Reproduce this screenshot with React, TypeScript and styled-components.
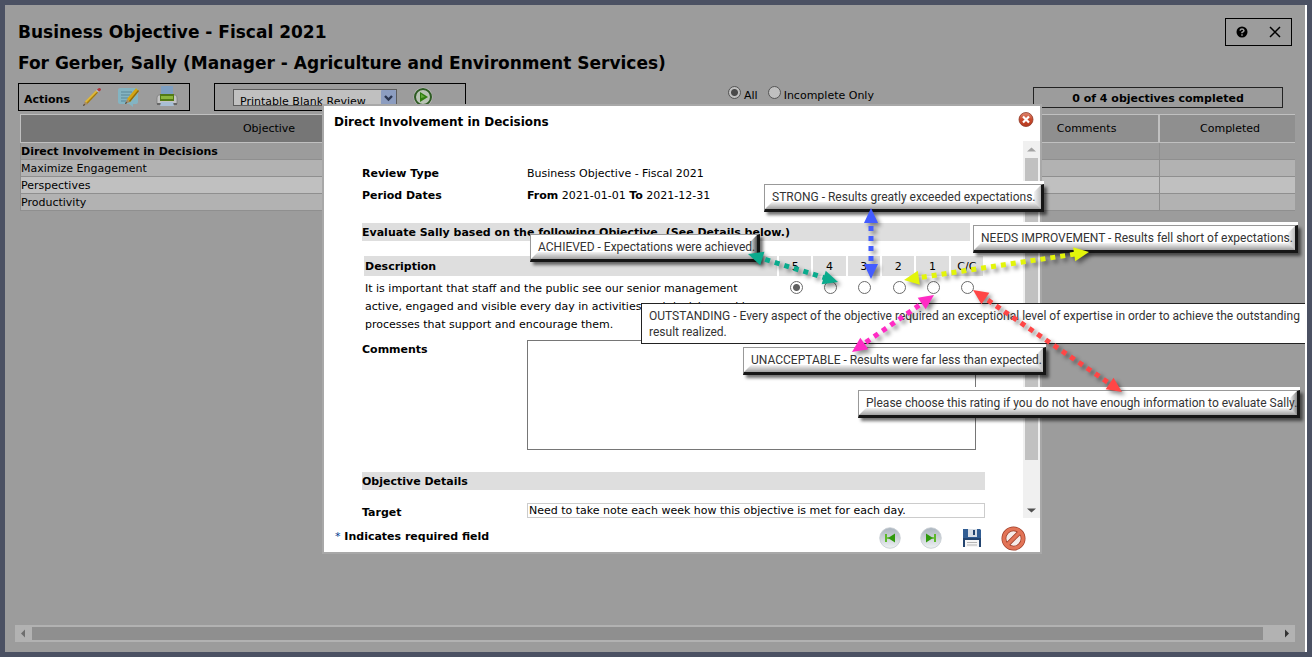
import React from "react";
import styled, { createGlobalStyle } from "styled-components";

const GlobalStyle = createGlobalStyle`
  * { box-sizing: border-box; }
  body {
    margin: 0;
    background: #4b5163;
    color: #000;
    font-family: Verdana, "DejaVu Sans", sans-serif;
    font-size: 11px;
  }
  h1, h2, h3, p { margin: 0; }
  button {
    display: inline-flex;
    align-items: center;
    justify-content: center;
    padding: 0;
    border: 0;
    background: none;
    cursor: pointer;
  }
  input, select, textarea { font: inherit; color: inherit; }
`;

const Frame = styled.div`
  display: flex;
  min-height: 100vh;
  padding: 5px;
  background: #4b5163;
`;

const Page = styled.main`
  position: relative;
  display: flex;
  flex-direction: column;
  flex: 1;
  min-width: 0;
  padding: 12px 10px 10px;
  overflow: hidden;
  border-right: 2px solid #fff;
  background: #9c9c9c;
`;

const Header = styled.header`
  display: flex;
  justify-content: space-between;
  align-items: flex-start;
  padding: 0 3px;
`;

const Heading = styled.h1`
  font-size: 17px;
  line-height: 31px;
  font-weight: bold;
`;

const WindowTools = styled.div`
  display: flex;
  justify-content: space-around;
  width: 67px;
  height: 28px;
  margin-top: 1px;
  border: 1px solid #000;
`;

const Toolbar = styled.div`
  display: flex;
  align-items: flex-start;
  height: 31px;
  margin-top: 4px;
  padding: 0 12px 0 3px;
`;

const Panel = styled.div<{ $width: number }>`
  display: flex;
  align-items: center;
  gap: 16px;
  width: ${(p) => p.$width}px;
  height: 28px;
  border: 1px solid #000;
`;

const ActionsPanel = styled(Panel)`
  padding: 0 5px;
  margin-right: 24px;
  strong { line-height: 28px; padding-top: 5px; margin-right: -4px; }
`;

const ReportPanel = styled(Panel)`
  padding: 0 18px;
`;

const SelectWrap = styled.div`
  position: relative;
  width: 164px;
  height: 17px;
  svg { position: absolute; top: 1px; right: 1px; pointer-events: none; }
`;

const Select = styled.select`
  appearance: none;
  width: 100%;
  height: 17px;
  padding: 5px 18px 0 6px;
  border: 1px solid #5c5c5c;
  border-radius: 0;
  background: #c0c0c0;
  line-height: 13px;
`;

const Filters = styled.div`
  display: flex;
  gap: 10px;
  margin-left: 262px;
  padding-top: 3px;
  label { display: flex; align-items: flex-start; gap: 3px; line-height: 20px; }
`;

const Radio = styled.input<{ $dim?: boolean }>`
  appearance: none;
  flex: none;
  width: 13px;
  height: 13px;
  margin: 0;
  border: 1px solid ${(p) => (p.$dim ? "#555" : "#6b6b6b")};
  border-radius: 50%;
  background: ${(p) => (p.$dim ? "#c0c0c0" : "#fff")};
  &:checked {
    background: radial-gradient(
      circle,
      ${(p) => (p.$dim ? "#4a4a4a" : "#606060")} 0 3px,
      ${(p) => (p.$dim ? "#c0c0c0" : "#fff")} 4px
    );
  }
`;

const Status = styled.div`
  width: 250px;
  margin: 4px 0 0 auto;
  padding-top: 2px;
  border: 1px solid #222;
  line-height: 17px;
  font-weight: bold;
  text-align: center;
`;

const ObjectiveTable = styled.table`
  width: calc(100% - 5px);
  margin-left: 5px;
  border-collapse: collapse;
  table-layout: fixed;
  th {
    height: 28px;
    padding: 0;
    border: 1px solid #c0c0c0;
    border-right-width: 0;
    background: #8f8f8f;
    font-weight: normal;
  }
  th:first-child { background: #767676; }
  th + th + th + th { border-left-width: 2px; padding-left: 5px; }
  td {
    height: 17px;
    padding: 0;
    border: 1px solid #8f8f8f;
    border-right-width: 0;
    border-top-width: 0;
    line-height: 15px;
  }
`;

const ObjectiveRow = styled.tr<{ $bg: string; $active?: boolean }>`
  background: ${(p) => p.$bg};
  font-weight: ${(p) => (p.$active ? "bold" : "normal")};
`;

const PageScroll = styled.div`
  display: flex;
  align-items: center;
  justify-content: space-between;
  height: 17px;
  margin-top: auto;
  background: #b2b2b2;
`;

const PageThumb = styled.div`
  flex: 1;
  height: 13px;
  margin-right: 15px;
  background: #8f8f8f;
`;

const Dialog = styled.section`
  position: absolute;
  top: 99px;
  left: calc(50% - 333px);
  width: 720px;
  border: 2px solid #a8a8a8;
  background: #fff;
`;

const DialogHead = styled.header`
  display: flex;
  justify-content: space-between;
  align-items: flex-start;
  height: 35px;
  padding: 6px 6px 0 10px;
`;

const DialogTitle = styled.h2`
  font-size: 12px;
  line-height: 20px;
`;

const DialogBody = styled.div`
  display: flex;
  height: 377px;
  overflow: hidden;
`;

const Form = styled.form`
  flex: 1;
  min-width: 0;
  padding: 22px 38px 0;
`;

const Row = styled.div`
  display: grid;
  grid-template-columns: 165px 1fr;
  line-height: 22px;
`;

const Label = styled.label`
  font-weight: bold;
`;

const Term = styled.span`
  font-weight: bold;
`;

const SectionBar = styled.h3<{ $short?: boolean }>`
  margin: ${(p) => (p.$short ? "16px 15px 13px 0" : "22px 0 13px")};
  padding-top: 1px;
  background: #dedede;
  font-size: 11px;
  line-height: 17px;
`;

const RatingTable = styled.table`
  width: 100%;
  border-spacing: 2px;
  table-layout: fixed;
  th {
    height: 20px;
    padding: 0 1px;
    background: #dedede;
    font-weight: normal;
  }
  th:first-child { width: 413px; text-align: left; font-weight: bold; }
  td { padding: 2px 0 0 2px; vertical-align: top; text-align: center; }
  td:first-child { padding: 2px 16px 0 1px; text-align: left; line-height: 18px; }
  td input { margin-top: 1px; }
`;

const Comments = styled.textarea`
  display: block;
  width: 449px;
  height: 110px;
  border: 1px solid #767676;
  resize: none;
`;

const CommentsRow = styled(Row)`
  margin-top: 4px;
  label { line-height: 20px; }
`;

const Target = styled.input`
  width: 100%;
  height: 15px;
  padding: 0 1px;
  border: 1px solid #ccc;
`;

const TargetRow = styled(Row)`
  label { line-height: 20px; }
`;

const ScrollBar = styled.div`
  display: flex;
  flex-direction: column;
  align-items: center;
  width: 17px;
  background: #f0f0f0;
`;

const ScrollThumb = styled.div`
  width: 13px;
  height: 302px;
  margin-bottom: auto;
  background: #c1c1c1;
`;

const DialogFoot = styled.footer`
  display: flex;
  align-items: center;
  justify-content: space-between;
  height: 34px;
  padding: 2px 14px 0 11px;
  font-weight: bold;
  span { font-weight: normal; color: #003a8c; }
`;

const FootButtons = styled.div`
  display: flex;
  gap: 15px;
  padding-top: 4px;
  button { width: 26px; height: 28px; }
`;

const Note = styled.div<{ $x: number; $y: number; $w: number; $shade?: string; $flat?: boolean }>`
  position: absolute;
  left: ${(p) => p.$x}px;
  top: ${(p) => p.$y}px;
  width: ${(p) => p.$w}px;
  height: 28px;
  padding-left: 7px;
  border: 1px solid #999;
  border-width: 1px 3px 3px 1px;
  border-right-color: #161616;
  border-bottom-color: #161616;
  background: #fff;
  box-shadow: 0 ${(p) => (p.$flat ? 0 : -3)}px 0 #fff, 3px 3px 3px rgba(0, 0, 0, 0.55);
  color: #333;
  font-family: "Segoe UI", Roboto, sans-serif;
  font-size: 12px;
  line-height: 24px;
  white-space: nowrap;
  span { position: relative; z-index: 1; }
  &::before {
    content: "";
    position: absolute;
    inset: auto 0 0 0;
    height: 7px;
    background: linear-gradient(#f4f4f4, #a0a0a0);
    clip-path: polygon(7px 0, 100% 0, 100% 100%, 0 100%);
  }
  &::after {
    content: "";
    position: absolute;
    inset: 0 0 0 auto;
    width: 7px;
    background: linear-gradient(90deg, #f4f4f4, ${(p) => p.$shade ?? "#bbb"});
    clip-path: polygon(100% 0, 100% 100%, 0 calc(100% - 7px), 0 7px);
  }
`;

const PlainNote = styled.div`
  position: absolute;
  left: 317px;
  top: 197px;
  width: 668px;
  padding: 4px 7px 3px;
  border: 1px solid #222;
  background: #fff;
  color: #333;
  font-family: "Segoe UI", Roboto, sans-serif;
  font-size: 12px;
  line-height: 16px;
`;

const ArrowLayer = styled.svg`
  position: absolute;
  left: 0;
  top: 0;
  pointer-events: none;
  filter: drop-shadow(3px 3px 2px rgba(0, 0, 0, 0.45));
`;

type ArrowProps = { from: [number, number]; to: [number, number]; color: string };

function Arrow({ from, to, color }: ArrowProps) {
  const dx = to[0] - from[0];
  const dy = to[1] - from[1];
  const length = Math.hypot(dx, dy);
  const angle = (Math.atan2(dy, dx) * 180) / Math.PI;
  return (
    <g transform={`translate(${from[0]} ${from[1]}) rotate(${angle})`} fill={color}>
      <path d="M0 0 15-7V7Z" />
      <path d={`M${length} 0l-15-7v14z`} />
      <path d={`M18 0H${length - 14}`} stroke={color} strokeWidth="5" strokeDasharray="5 5" />
    </g>
  );
}

const PencilIcon = () => (
  <svg width="20" height="20" viewBox="0 0 20 20">
    <path d="M1 19 3 14 6 17Z" fill="#a58a66" />
    <path d="M1 19 2 17 3 18Z" fill="#222" />
    <path d="M3 14.5 14 3.5 16 5.5 5.5 16.5Z" fill="#c79a16" />
    <path d="M3 14.5 14 3.5 15 4.5 4 15.5Z" fill="#dfba45" />
    <path d="M5 16 15.5 5 16 5.5 5.5 16.5Z" fill="#8f6a0c" />
    <path d="M14 3.5 15 2.5 17 4.5 16 5.5Z" fill="#bbb" />
    <path d="M15 2.5Q17 0 18.5 1.5T17 4.5Z" fill="#b3383c" />
  </svg>
);

const NoteIcon = () => (
  <svg width="22" height="20" viewBox="0 0 22 20">
    <path d="M2 1H18Q20 1 20 3V15Q20 17 18 17H15L15 20 11 17H2Q0 17 0 15V3Q0 1 2 1Z" fill="#83b4c2" />
    <path d="M3 5H14M3 8H12M3 11H10M3 14H8" stroke="#5b8797" />
    <path d="M7 17 9 12 12 15Z" fill="#a58a66" />
    <path d="M9 12 18 1 21 4 12 15Z" fill="#d3a514" />
    <path d="M11 14 20 3 21 4 12 15Z" fill="#8f6a0c" />
    <path d="M7 17 8 15 9 16Z" fill="#222" />
  </svg>
);

const PrinterIcon = () => (
  <svg width="22" height="22" viewBox="0 0 22 22">
    <path d="M5 0H17V9H5Z" fill="#7d9fc2" />
    <path d="M3 9H19Q21 9 21 12V18H1V12Q1 9 3 9Z" fill="#c4c4c4" stroke="#777" strokeWidth=".7" />
    <path d="M4 8H18V15H4Z" fill="#527a16" />
    <path d="M5 10H17V13H5Z" fill="#8bb63d" />
    <path d="M1 17H21V19H1Z" fill="#666" />
    <path d="M5 16H17L18 20H4Z" fill="#a9bfd5" />
  </svg>
);

const PlayIcon = () => (
  <svg width="20" height="20" viewBox="0 0 20 20">
    <circle cx="10" cy="10" r="9.5" fill="#c0c0c0" />
    <circle cx="10" cy="10" r="8" fill="#b9c4b5" stroke="#2e5b23" strokeWidth="2" />
    <path d="M7 5 15 10 7 15Z" fill="#2f7d0e" />
    <path d="M8 7 12 10 8 11Z" fill="#64a93d" />
  </svg>
);

const ChevronIcon = () => (
  <svg width="15" height="15" viewBox="0 0 15 15">
    <rect width="15" height="15" rx="1" fill="#8c9dc0" />
    <path d="M4 6 7.5 9.5 11 6" fill="none" stroke="#2b3650" strokeWidth="2.4" />
  </svg>
);

const HelpIcon = () => (
  <svg width="12" height="12" viewBox="0 0 12 12">
    <circle cx="6" cy="6" r="5.5" />
    <path d="M4 4.6Q4.3 3 6 3T8 4.6Q8 5.6 6 6.4V7.2M6 8.2V9.8" fill="none" stroke="#9c9c9c" strokeWidth="1.5" />
  </svg>
);

const CrossIcon = () => (
  <svg width="12" height="12" viewBox="0 0 12 12">
    <path d="M1 1 11 11M11 1 1 11" stroke="#000" strokeWidth="1.5" />
  </svg>
);

const CloseIcon = () => (
  <svg width="16" height="16" viewBox="0 0 16 16">
    <defs>
      <linearGradient id="red" x2="0" y2="1">
        <stop stopColor="#e08a72" />
        <stop offset=".5" stopColor="#c8492d" />
        <stop offset="1" stopColor="#b53a1e" />
      </linearGradient>
    </defs>
    <circle cx="8" cy="7.5" r="7" fill="url(#red)" stroke="#8f3a28" strokeWidth=".8" />
    <path d="M5 4.5 11 10.5M11 4.5 5 10.5" stroke="#fff" strokeWidth="2.2" />
  </svg>
);

const StepIcon = ({ flip }: { flip?: boolean }) => (
  <svg width="22" height="22" viewBox="0 0 22 22">
    <defs>
      <linearGradient id="disc" x2="0" y2="1">
        <stop stopColor="#aab4be" />
        <stop offset="1" stopColor="#eef1f3" />
      </linearGradient>
    </defs>
    <circle cx="11" cy="11" r="10.3" fill="url(#disc)" stroke="#c5cbd0" strokeWidth=".8" />
    <g transform={flip ? "translate(22 0) scale(-1 1)" : undefined}>
      <path d="M6 7H8V15H6ZM8 10.2H10V11.8H8Z" fill="#5cb92a" />
      <path d="M16 6.5V15.5L9 11Z" fill="#2e9a0c" />
    </g>
  </svg>
);

const SaveIcon = () => (
  <svg width="20" height="20" viewBox="0 0 20 20">
    <path d="M1 1H18L19 2V19H1Z" fill="#315d93" />
    <path d="M1 10H19V19H1Z" fill="#23446f" />
    <path d="M6 1H15V9H6Z" fill="#d8dee6" />
    <path d="M11 2H13V7H11Z" fill="#23446f" />
    <path d="M3 12H17V19H3Z" fill="#f6f6f6" />
    <path d="M5 14.5H15M5 17H15" stroke="#b5b5b5" />
  </svg>
);

const CancelIcon = () => (
  <svg width="25" height="25" viewBox="0 0 25 25">
    <circle cx="12.5" cy="12.5" r="9.6" fill="#f6ece9" stroke="#9c3c26" strokeWidth="4.8" />
    <path d="M6.5 18.5 18.5 6.5" stroke="#9c3c26" strokeWidth="4.6" />
    <circle cx="12.5" cy="12.5" r="9.6" fill="none" stroke="#e27457" strokeWidth="3.4" />
    <path d="M5.8 19.2 19.2 5.8" stroke="#e27457" strokeWidth="3.2" />
  </svg>
);

const ScrollArrow = ({ direction, color }: { direction: "up" | "down" | "left" | "right"; color: string }) => {
  const paths = {
    up: "M4 10.5 8.5 6.5 13 10.5Z",
    down: "M4 7.5 8.5 11.5 13 7.5Z",
    left: "M10 4.5V12.5L6 8.5Z",
    right: "M7 4.5V12.5L11 8.5Z",
  };
  return (
    <svg width="17" height="17" viewBox="0 0 17 17">
      <path d={paths[direction]} fill={color} />
    </svg>
  );
};

const objectives = [
  { name: "Direct Involvement in Decisions", bg: "#9c9c9c", active: true },
  { name: "Maximize Engagement", bg: "#b2b2b2" },
  { name: "Perspectives", bg: "#c0c0c0" },
  { name: "Productivity", bg: "#b2b2b2" },
];

const ratings = ["5", "4", "3", "2", "1", "C/C"];

export default function App() {
  return (
    <Frame>
      <GlobalStyle />
      <Page>
        <Header>
          <div>
            <Heading>Business Objective - Fiscal 2021</Heading>
            <Heading as="h2">For Gerber, Sally (Manager - Agriculture and Environment Services)</Heading>
          </div>
          <WindowTools>
            <button aria-label="Help"><HelpIcon /></button>
            <button aria-label="Close window"><CrossIcon /></button>
          </WindowTools>
        </Header>

        <Toolbar>
          <ActionsPanel $width={172}>
            <strong>Actions</strong>
            <button aria-label="Edit"><PencilIcon /></button>
            <button aria-label="Add note"><NoteIcon /></button>
            <button aria-label="Print"><PrinterIcon /></button>
          </ActionsPanel>
          <ReportPanel $width={252}>
            <SelectWrap>
              <Select aria-label="Report" defaultValue="blank">
                <option value="blank">Printable Blank Review</option>
              </Select>
              <ChevronIcon />
            </SelectWrap>
            <button aria-label="Run report"><PlayIcon /></button>
          </ReportPanel>
          <Filters>
            <label><Radio $dim type="radio" name="filter" defaultChecked />All</label>
            <label><Radio $dim type="radio" name="filter" />Incomplete Only</label>
          </Filters>
          <Status>0 of 4 objectives completed</Status>
        </Toolbar>

        <ObjectiveTable>
          <colgroup>
            <col style={{ width: "39%" }} />
            <col style={{ width: "39%" }} />
            <col />
            <col style={{ width: "136px" }} />
          </colgroup>
          <thead>
            <tr><th>Objective</th><th /><th>Comments</th><th>Completed</th></tr>
          </thead>
          <tbody>
            {objectives.map((o) => (
              <ObjectiveRow key={o.name} $bg={o.bg} $active={o.active}>
                <td>{o.name}</td><td /><td /><td />
              </ObjectiveRow>
            ))}
          </tbody>
        </ObjectiveTable>

        <PageScroll>
          <ScrollArrow direction="left" color="#6e6e6e" />
          <PageThumb />
          <ScrollArrow direction="right" color="#333" />
        </PageScroll>

        <Dialog role="dialog" aria-labelledby="dialog-title">
          <DialogHead>
            <DialogTitle id="dialog-title">Direct Involvement in Decisions</DialogTitle>
            <button aria-label="Close dialog"><CloseIcon /></button>
          </DialogHead>
          <DialogBody>
            <Form>
              <Row><Term>Review Type</Term><span>Business Objective - Fiscal 2021</span></Row>
              <Row>
                <Term>Period Dates</Term>
                <span><b>From</b> 2021-01-01 <b>To</b> 2021-12-31</span>
              </Row>
              <SectionBar $short>Evaluate Sally based on the following Objective. (See Details below.)</SectionBar>
              <RatingTable>
                <thead>
                  <tr>
                    <th scope="col">Description</th>
                    {ratings.map((r) => <th key={r} scope="col">{r}</th>)}
                  </tr>
                </thead>
                <tbody>
                  <tr>
                    <td>
                      It is important that staff and the public see our senior management
                      active, engaged and visible every day in activities and decision making
                      processes that support and encourage them.
                    </td>
                    {ratings.map((r) => (
                      <td key={r}>
                        <Radio type="radio" name="rating" aria-label={r} defaultChecked={r === "5"} />
                      </td>
                    ))}
                  </tr>
                </tbody>
              </RatingTable>
              <CommentsRow>
                <Label htmlFor="comments">Comments</Label>
                <Comments id="comments" />
              </CommentsRow>
              <SectionBar>Objective Details</SectionBar>
              <TargetRow>
                <Label htmlFor="target">Target</Label>
                <Target id="target" readOnly value="Need to take note each week how this objective is met for each day." />
              </TargetRow>
            </Form>
            <ScrollBar>
              <ScrollArrow direction="up" color="#a3a3a3" />
              <ScrollThumb />
              <ScrollArrow direction="down" color="#505050" />
            </ScrollBar>
          </DialogBody>
          <DialogFoot>
            <p><span>*</span> Indicates required field</p>
            <FootButtons>
              <button aria-label="Previous"><StepIcon /></button>
              <button aria-label="Next"><StepIcon flip /></button>
              <button aria-label="Save"><SaveIcon /></button>
              <button aria-label="Cancel"><CancelIcon /></button>
            </FootButtons>
          </DialogFoot>

          <Note $x={440} $y={78} $w={280}><span>STRONG - Results greatly exceeded expectations.</span></Note>
          <Note $x={206} $y={128} $w={230} $shade="#555" $flat><span>ACHIEVED - Expectations were achieved.</span></Note>
          <Note $x={649} $y={119} $w={325}><span>NEEDS IMPROVEMENT - Results fell short of expectations.</span></Note>
          <PlainNote>
            OUTSTANDING - Every aspect of the objective required an exceptional level of expertise in order to achieve the outstanding
            result realized.
          </PlainNote>
          <Note $x={419} $y={241} $w={303}><span>UNACCEPTABLE - Results were far less than expected.</span></Note>
          <Note $x={534} $y={284} $w={442} $shade="#888">
            <span>Please choose this rating if you do not have enough information to evaluate Sally.</span>
          </Note>
          <ArrowLayer width="980" height="300" viewBox="0 0 980 300" aria-hidden="true">
            <Arrow from={[547, 102]} to={[547, 173]} color="#435cff" />
            <Arrow from={[424, 148]} to={[514, 176]} color="#0aab8d" />
            <Arrow from={[580, 174]} to={[765, 146]} color="#e3f50b" />
            <Arrow from={[610, 189]} to={[528, 246]} color="#ff2bc4" />
            <Arrow from={[649, 184]} to={[798, 286]} color="#ff4646" />
          </ArrowLayer>
        </Dialog>
      </Page>
    </Frame>
  );
}
